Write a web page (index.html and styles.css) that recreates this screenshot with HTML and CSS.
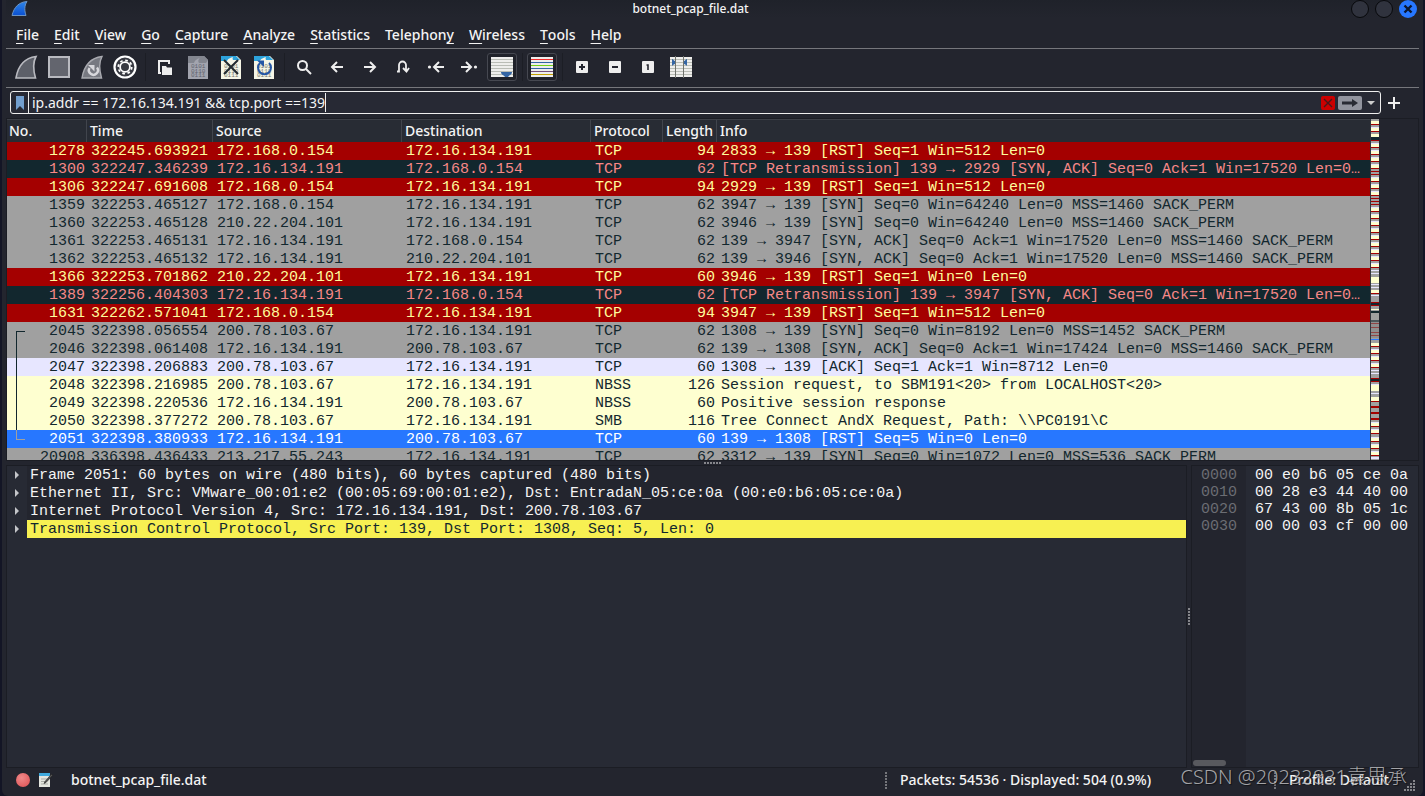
FILE: index.html
```html
<!DOCTYPE html>
<html lang="en">
<head>
<meta charset="utf-8">
<title>botnet_pcap_file.dat</title>
<link rel="stylesheet" href="styles.css">
</head>
<body>
<div class="window">
  <header class="titlebar">
    <svg class="app-icon" width="18" height="18" viewBox="0 0 18 18"><defs><linearGradient id="fin" x1="0" y1="0" x2="0" y2="1"><stop offset="0" stop-color="#2f86e8"/><stop offset="1" stop-color="#0a4fd0"/></linearGradient></defs><path d="M1 15.500C3 7 8 2 16 1.500C13 6 13.500 11 15 15.500Z" fill="url(#fin)" stroke="#6b93c4" stroke-width="1"/></svg>
    <h1 class="title">botnet_pcap_file.dat</h1>
    <div class="window-buttons">
      <button class="round" aria-label="Minimize"></button>
      <button class="round" aria-label="Maximize"></button>
      <button class="round close" aria-label="Close"><svg width="18" height="18" viewBox="0 0 18 18"><path d="M5.500 5.500l7 7M12.500 5.500l-7 7" stroke="#0b1730" stroke-width="2.400"/></svg></button>
    </div>
  </header>
  <nav class="menubar">
    <button><u>F</u>ile</button><button><u>E</u>dit</button><button><u>V</u>iew</button><button><u>G</u>o</button><button><u>C</u>apture</button><button><u>A</u>nalyze</button><button><u>S</u>tatistics</button><button>Telephon<u>y</u></button><button><u>W</u>ireless</button><button><u>T</u>ools</button><button><u>H</u>elp</button>
  </nav>
  <div class="toolbar">
    <button aria-label="Start capture"><svg viewBox="0 0 24 24"><path d="M2 23C4 11 10 3 22 1.500C18.500 8 19.500 16 21.500 23Z" fill="#5d6069" stroke="#b9bac0" stroke-width="1.600"/></svg></button>
    <button aria-label="Stop capture"><svg viewBox="0 0 24 24"><rect x="2" y="2" width="20" height="20" fill="#63656e" stroke="#b9bac0" stroke-width="2"/></svg></button>
    <button aria-label="Restart capture"><svg viewBox="0 0 24 24"><path d="M2 23C4 11 10 3 22 1.500C18.500 8 19.500 16 21.500 23Z" fill="#777981" stroke="#a9aab0" stroke-width="1.400"/><path d="M9.500 13A4.500 4.500 0 1 0 17 12.500" fill="none" stroke="#d8d8dc" stroke-width="2.400"/><path d="M8 10h6.500v6.500Z" fill="#d8d8dc"/></svg></button>
    <button aria-label="Capture options"><svg viewBox="0 0 24 24"><circle cx="12" cy="12" r="10.500" fill="#383a42" stroke="#fff" stroke-width="2.200"/><circle cx="12" cy="12" r="6.700" fill="none" stroke="#fff" stroke-width="1.800" stroke-dasharray="2.630 2.630"/><circle cx="12" cy="12" r="4.900" fill="#383a42" stroke="#fff" stroke-width="1.800"/></svg></button>
    <span class="sep"></span>
    <button aria-label="Open"><svg viewBox="0 0 24 24"><path d="M8 18H6V6h10v3" fill="none" stroke="#eee" stroke-width="2"/><path d="M9 11h4l1 1.500h5V20H9Z" fill="#eee"/></svg></button>
    <button aria-label="Save"><svg viewBox="0 0 24 24"><path d="M2 1h16l4 4v19H2Z" fill="#a2a4ae"/><path d="M2 1h16l4 4-2 3h-7c-2-3 1-5 1-5s-5 1-6 5H2Z" fill="#83868f"/><g class="bits dim"><text x="5" y="13">0101</text><text x="5" y="18">0110</text><text x="5" y="22">0111</text></g></svg></button>
    <button aria-label="Close file"><svg viewBox="0 0 24 24"><path d="M2 1h16l4 4v19H2Z" fill="#f5f5e6"/><path d="M2 1h15l4 4h-7c-1-2 0-3 0-3S9 3 8 6H2Z" fill="#2da3dc"/><g class="bits"><text x="5" y="13">0101</text><text x="5" y="18">0110</text><text x="5" y="22">0111</text></g><path d="M5 5l14 14M19 5L5 19" stroke="#222a30" stroke-width="2"/></svg></button>
    <button aria-label="Reload"><svg viewBox="0 0 24 24"><path d="M2 1h16l4 4v19H2Z" fill="#f5f5e6"/><path d="M2 1h15l4 4h-7c-1-2 0-3 0-3S9 3 8 6H2Z" fill="#2da3dc"/><g class="bits"><text x="5" y="13">0101</text><text x="5" y="18">0110</text><text x="5" y="22">0111</text></g><path d="M17 8a6.500 6.500 0 1 1-9 0" fill="none" stroke="#2456a5" stroke-width="2"/><path d="M5 5.500h7v6.500Z" fill="#2456a5"/></svg></button>
    <span class="sep"></span>
    <button aria-label="Find"><svg viewBox="0 0 24 24"><circle cx="10.500" cy="10.500" r="4.500" fill="none" stroke="#eee" stroke-width="2"/><path d="M14 14l5 5" stroke="#eee" stroke-width="2"/></svg></button>
    <button aria-label="Back"><svg viewBox="0 0 24 24"><path d="M18 12H7M12 7l-5 5 5 5" fill="none" stroke="#eee" stroke-width="2"/></svg></button>
    <button aria-label="Forward"><svg viewBox="0 0 24 24"><path d="M6 12h11M12 7l5 5-5 5" fill="none" stroke="#eee" stroke-width="2"/></svg></button>
    <button aria-label="Go to packet"><svg viewBox="0 0 24 24"><path d="M6 16.500h2V10a3.500 3.500 0 0 1 7 0v6M12 13l3.500 3.500L18 13" fill="none" stroke="#eee" stroke-width="1.800"/></svg></button>
    <button aria-label="First packet"><svg viewBox="0 0 24 24"><circle cx="5.500" cy="12" r="1.600" fill="#eee"/><path d="M20 12H10M15 7l-5 5 5 5" fill="none" stroke="#eee" stroke-width="2"/></svg></button>
    <button aria-label="Last packet"><svg viewBox="0 0 24 24"><circle cx="18.500" cy="12" r="1.600" fill="#eee"/><path d="M4 12h10M9 7l5 5-5 5" fill="none" stroke="#eee" stroke-width="2"/></svg></button>
    <button class="pressed" aria-label="Auto scroll"><svg viewBox="0 0 24 24"><path d="M1 2h22v20H1Z" fill="#eeeeec"/><path d="M1 4.500h22M1 7.500h22M1 10.500h22M1 13.500h22M1 16.500h22M1 19.500h22" stroke="#babdb6"/><path d="M11 17h11c0 3-3 3-4 5h-3c-1-2-4-2-4-5Z" fill="#3465a4"/></svg></button>
    <span class="sep"></span>
    <button class="pressed" aria-label="Colorize"><svg viewBox="0 0 24 24"><path d="M1 2h22v20H1Z" fill="#eeeeec"/><path d="M1 4.500h22" stroke="#ef2929"/><path d="M1 7.500h22M1 13.500h22" stroke="#3465a4"/><path d="M1 10.500h22" stroke="#73d216"/><path d="M1 16.500h22" stroke="#75507b"/><path d="M1 19.500h22" stroke="#c4a000"/></svg></button>
    <span class="sep"></span>
    <button aria-label="Zoom in"><svg viewBox="0 0 24 24"><rect x="6" y="6" width="12" height="12" rx="1" fill="#eee"/><path d="M12 9v6M9 12h6" stroke="#23252e" stroke-width="2"/></svg></button>
    <button aria-label="Zoom out"><svg viewBox="0 0 24 24"><rect x="6" y="6" width="12" height="12" rx="1" fill="#eee"/><path d="M9 12h6" stroke="#23252e" stroke-width="2"/></svg></button>
    <button aria-label="Normal size"><svg viewBox="0 0 24 24"><rect x="6" y="6" width="12" height="12" rx="1" fill="#eee"/><path d="M10.500 10h1.500v5" fill="none" stroke="#23252e" stroke-width="1.600"/></svg></button>
    <button aria-label="Resize columns"><svg viewBox="0 0 24 24"><path d="M1 2h22v20H1Z" fill="#eeeeec"/><path d="M1 4.500h22M1 7.500h22M1 10.500h22M1 13.500h22M1 16.500h22M1 19.500h22" stroke="#babdb6"/><path d="M6.500 1v22M14.500 1v22" stroke="#70736e"/><path d="M3 4c1 0 2 2 3 2v3c-1 0-2 1-3 2ZM18 4c-1 0-2 2-3 2v3c1 0 2 1 3 2Z" fill="#3465a4"/></svg></button>
  </div>
  <div class="filterbar">
    <div class="filter">
      <button class="bookmark" aria-label="Filter bookmarks"><svg width="8" height="14" viewBox="0 0 8 14"><path d="M0 0h8v14l-4-4-4 4Z" fill="#729fcf"/></svg></button>
      <label class="field"><input type="text" aria-label="Display filter" value="ip.addr == 172.16.134.191 &amp;&amp; tcp.port ==139"><span class="caret"></span></label>
      <button class="clear" aria-label="Clear filter"><svg width="14" height="14" viewBox="0 0 14 14"><rect width="14" height="14" rx="2" fill="#cc0000"/><path d="M3 3l8 8M11 3l-8 8" stroke="#46181b" stroke-width="1.400"/></svg></button>
      <button class="apply" aria-label="Apply filter"><svg width="24" height="14" viewBox="0 0 24 14"><rect width="24" height="14" rx="2" fill="#92949e"/><path d="M4 5.500h10V3l6 4-6 4V8.500H4Z" fill="#292b34"/></svg></button>
      <button class="history" aria-label="Filter history"><svg width="8" height="4" viewBox="0 0 8 4"><path d="M0 0h8L4 4Z" fill="#ccc"/></svg></button>
    </div>
    <button class="add" aria-label="Add filter button"><svg width="12" height="12" viewBox="0 0 12 12"><path d="M6 0v12M0 6h12" stroke="#eee" stroke-width="2"/></svg></button>
  </div>
  <main class="panes">
    <section class="packets">
      <div class="list">
        <table>
          <colgroup><col class="c-no"><col class="c-time"><col class="c-addr"><col class="c-addr"><col class="c-proto"><col class="c-len"><col></colgroup>
          <thead><tr><th>No.</th><th>Time</th><th>Source</th><th>Destination</th><th>Protocol</th><th>Length</th><th>Info</th></tr></thead>
          <tbody>
<tr class="rst"><td>1278</td><td>322245.693921</td><td>172.168.0.154</td><td>172.16.134.191</td><td>TCP</td><td>94</td><td>2833 → 139 [RST] Seq=1 Win=512 Len=0</td></tr>
<tr class="bad"><td>1300</td><td>322247.346239</td><td>172.16.134.191</td><td>172.168.0.154</td><td>TCP</td><td>62</td><td>[TCP Retransmission] 139 → 2929 [SYN, ACK] Seq=0 Ack=1 Win=17520 Len=0 MSS=1460 SACK_PERM</td></tr>
<tr class="rst"><td>1306</td><td>322247.691608</td><td>172.168.0.154</td><td>172.16.134.191</td><td>TCP</td><td>94</td><td>2929 → 139 [RST] Seq=1 Win=512 Len=0</td></tr>
<tr class="syn"><td>1359</td><td>322253.465127</td><td>172.168.0.154</td><td>172.16.134.191</td><td>TCP</td><td>62</td><td>3947 → 139 [SYN] Seq=0 Win=64240 Len=0 MSS=1460 SACK_PERM</td></tr>
<tr class="syn"><td>1360</td><td>322253.465128</td><td>210.22.204.101</td><td>172.16.134.191</td><td>TCP</td><td>62</td><td>3946 → 139 [SYN] Seq=0 Win=64240 Len=0 MSS=1460 SACK_PERM</td></tr>
<tr class="syn"><td>1361</td><td>322253.465131</td><td>172.16.134.191</td><td>172.168.0.154</td><td>TCP</td><td>62</td><td>139 → 3947 [SYN, ACK] Seq=0 Ack=1 Win=17520 Len=0 MSS=1460 SACK_PERM</td></tr>
<tr class="syn"><td>1362</td><td>322253.465132</td><td>172.16.134.191</td><td>210.22.204.101</td><td>TCP</td><td>62</td><td>139 → 3946 [SYN, ACK] Seq=0 Ack=1 Win=17520 Len=0 MSS=1460 SACK_PERM</td></tr>
<tr class="rst"><td>1366</td><td>322253.701862</td><td>210.22.204.101</td><td>172.16.134.191</td><td>TCP</td><td>60</td><td>3946 → 139 [RST] Seq=1 Win=0 Len=0</td></tr>
<tr class="bad"><td>1389</td><td>322256.404303</td><td>172.16.134.191</td><td>172.168.0.154</td><td>TCP</td><td>62</td><td>[TCP Retransmission] 139 → 3947 [SYN, ACK] Seq=0 Ack=1 Win=17520 Len=0 MSS=1460 SACK_PERM</td></tr>
<tr class="rst"><td>1631</td><td>322262.571041</td><td>172.168.0.154</td><td>172.16.134.191</td><td>TCP</td><td>94</td><td>3947 → 139 [RST] Seq=1 Win=512 Len=0</td></tr>
<tr class="syn first"><td>2045</td><td>322398.056554</td><td>200.78.103.67</td><td>172.16.134.191</td><td>TCP</td><td>62</td><td>1308 → 139 [SYN] Seq=0 Win=8192 Len=0 MSS=1452 SACK_PERM</td></tr>
<tr class="syn mid"><td>2046</td><td>322398.061408</td><td>172.16.134.191</td><td>200.78.103.67</td><td>TCP</td><td>62</td><td>139 → 1308 [SYN, ACK] Seq=0 Ack=1 Win=17424 Len=0 MSS=1460 SACK_PERM</td></tr>
<tr class="tcp mid"><td>2047</td><td>322398.206883</td><td>200.78.103.67</td><td>172.16.134.191</td><td>TCP</td><td>60</td><td>1308 → 139 [ACK] Seq=1 Ack=1 Win=8712 Len=0</td></tr>
<tr class="smb mid"><td>2048</td><td>322398.216985</td><td>200.78.103.67</td><td>172.16.134.191</td><td>NBSS</td><td>126</td><td>Session request, to SBM191&lt;20&gt; from LOCALHOST&lt;20&gt;</td></tr>
<tr class="smb mid"><td>2049</td><td>322398.220536</td><td>172.16.134.191</td><td>200.78.103.67</td><td>NBSS</td><td>60</td><td>Positive session response</td></tr>
<tr class="smb mid"><td>2050</td><td>322398.377272</td><td>200.78.103.67</td><td>172.16.134.191</td><td>SMB</td><td>116</td><td>Tree Connect AndX Request, Path: \\PC0191\C</td></tr>
<tr class="selected last"><td>2051</td><td>322398.380933</td><td>172.16.134.191</td><td>200.78.103.67</td><td>TCP</td><td>60</td><td>139 → 1308 [RST] Seq=5 Win=0 Len=0</td></tr>
<tr class="syn"><td>20908</td><td>336398.436433</td><td>213.217.55.243</td><td>172.16.134.191</td><td>TCP</td><td>62</td><td>3312 → 139 [SYN] Seq=0 Win=1072 Len=0 MSS=536 SACK_PERM</td></tr>
          </tbody>
        </table>
      </div>
      <svg class="minimap" id="minimap" width="8" height="341" viewBox="0 0 8 341" shape-rendering="crispEdges"></svg>
    </section>
    <div class="grip-h"></div>
    <section class="lower">
      <ul class="tree">
        <li><button aria-label="Expand"></button><span>Frame 2051: 60 bytes on wire (480 bits), 60 bytes captured (480 bits)</span></li>
        <li><button aria-label="Expand"></button><span>Ethernet II, Src: VMware_00:01:e2 (00:05:69:00:01:e2), Dst: EntradaN_05:ce:0a (00:e0:b6:05:ce:0a)</span></li>
        <li><button aria-label="Expand"></button><span>Internet Protocol Version 4, Src: 172.16.134.191, Dst: 200.78.103.67</span></li>
        <li class="current"><button aria-label="Expand"></button><span>Transmission Control Protocol, Src Port: 139, Dst Port: 1308, Seq: 5, Len: 0</span></li>
      </ul>
      <div class="grip-v"></div>
      <div class="hex">
        <pre class="offsets">0000
0010
0020
0030</pre>
        <pre class="bytes">00 e0 b6 05 ce 0a
00 28 e3 44 40 00
67 43 00 8b 05 1c
00 00 03 cf 00 00</pre>
        <div class="hscroll"></div>
      </div>
    </section>
  </main>
  <footer class="statusbar">
    <button aria-label="Expert information" class="expert"></button>
    <button aria-label="Capture comments"><svg width="14" height="14" viewBox="0 0 14 14"><path d="M0 0h11v14H0Z" fill="#e4e6e0"/><path d="M0 0h11v3H0Z" fill="#3fa9dd"/><path d="M2 6h6M2 8.500h5M2 11h7" stroke="#a9aca6"/><path d="M12.500 1L6 8.500l-1 2 2-1L13.500 2.500Z" fill="#555" stroke="#222" stroke-width=".6"/></svg></button>
    <span class="file">botnet_pcap_file.dat</span>
    <span class="dots"></span>
    <span class="counts">Packets: 54536 · Displayed: 504 (0.9%)</span>
    <span class="dots"></span>
    <span class="profile">Profile: Default</span>
    <svg class="resize" width="12" height="12" viewBox="0 0 12 12"><path d="M9 1h2M6 4h2M9 4h2M3 7h2M6 7h2M9 7h2M0 10h2M3 10h2M6 10h2M9 10h2" stroke="#85868b" stroke-width="2"/></svg>
  </footer>
  <div class="watermark">CSDN @20232831袁思承</div>
</div>
<script src="minimap.js"></script>
</body>
</html>
```
FILE: styles.css
```css
* { box-sizing: border-box; }
body { margin: 0; height: 100vh; padding: 0 2px; overflow: hidden; background: #131525; color: #f4f4f4; font: 500 14px/20px "Noto Sans", sans-serif; }
button { margin: 0; padding: 0; border: 0; background: none; color: inherit; font: inherit; display: flex; align-items: center; justify-content: center; }
svg { display: block; }
.window { position: relative; height: 100%; padding: 0 4px; background: #23252e; display: flex; flex-direction: column; border-radius: 0 0 6px 6px; }
.titlebar { height: 18px; display: grid; grid-template-columns: 1fr auto 1fr; align-items: center; background: linear-gradient(#1f222a, #23252e); }
.app-icon { margin-left: 5px; }
.title { margin: 0; padding-right: 44px; font-size: 12px; line-height: 18px; font-weight: 500; }
.window-buttons { display: flex; gap: 6px; justify-content: flex-end; padding-right: 2px; }
.round { width: 18px; height: 18px; border: 1px solid #08090c; border-radius: 50%; background: #30333e; }
.round.close { border: 0; background: #2777ff; }
.menubar { height: 31px; padding: 5px 10px 0; display: flex; align-items: flex-start; gap: 15px; border-bottom: 1px solid #76777c; }
.menubar button { height: 24px; }
.menubar u { text-underline-offset: 3px; text-decoration-thickness: 1px; text-decoration-skip-ink: none; }
.toolbar { height: 39px; padding: 4px 8px 0; display: flex; align-items: flex-start; gap: 9px; border-bottom: 1px solid #76777c; }
.toolbar button { width: 24px; height: 28px; flex: none; }
.toolbar button svg { width: 24px; height: 24px; flex: none; }
.toolbar .pressed { width: 30px; margin: 0 -3px; border: 1px solid #464851; border-radius: 3px; background: #20222a; }
.sep { width: 1px; height: 28px; margin: 0 -2px 0 -1px; background: #1c1e25; }
.bits { font: 6px "Liberation Mono", monospace; fill: #77796f; }
.bits.dim { fill: #60636d; }
.filterbar { height: 30px; padding: 3px 18px 4px 4px; display: flex; align-items: center; gap: 6px; }
.filter { flex: 1; height: 23px; display: flex; align-items: center; border: 1px solid #eee; border-radius: 3px; background: #272934; }
.bookmark { width: 18px; height: 21px; border-right: 1px solid #eee; }
.field { flex: 1; display: flex; align-items: center; }
.field input { field-sizing: content; padding: 0 0 0 3px; border: 0; outline: 0; background: none; color: inherit; font: 400 14px/20px "Noto Sans", sans-serif; height: 20px; }
.caret { width: 1px; height: 19px; background: #eee; }
.clear { margin-right: 3px; }
.history { width: 18px; }
.add { width: 14px; }
.panes { flex: 1; min-height: 0; display: grid; grid-template-rows: 343fr 4px 303fr; }
.packets { min-height: 0; display: flex; border: 1px solid #1b1d24; padding-right: 39px; overflow: hidden; }
.list { flex: 1; min-width: 0; overflow: hidden; border-right: 1px solid #33363e; }
table { width: 100%; table-layout: fixed; border-collapse: separate; border-spacing: 0; font: 15px/17px "Liberation Mono", monospace; }
.c-no { width: 80px; }
.c-time { width: 126px; }
.c-addr { width: 189px; }
.c-proto { width: 72px; }
.c-len { width: 54px; }
th { height: 23px; padding: 0 3px; border-right: 1px solid #41454d; border-top: 1px solid #3c3f47; background: #282c34; text-align: left; font: 500 14px/20px "Noto Sans", sans-serif; }
th:first-child { padding-left: 2px; }
th:last-child { border-right: 0; }
td { height: 18px; padding: 1px 8px 0 4px; overflow: hidden; white-space: nowrap; text-overflow: ellipsis; }
td:nth-child(1), td:nth-child(6) { padding: 1px 2px 0; text-align: right; }
td:nth-child(2) { padding-right: 0; }
.rst { background: #a40000; color: #fffc9c; }
.bad { background: #12272e; color: #f78787; }
.syn { background: #a0a0a0; color: #12272e; }
.tcp { background: #e7e6ff; color: #12272e; }
.smb { background: #feffd0; color: #12272e; }
.selected { background: #2777ff; color: #fff; }
.first td:first-child { background: linear-gradient(#12272e, #12272e) 9px 9px / 9px 1px no-repeat, linear-gradient(#12272e, #12272e) 9px 9px / 1px 9px no-repeat; }
.mid td:first-child { background: linear-gradient(#12272e, #12272e) 9px 0 / 1px 100% no-repeat; }
.last td:first-child { background: linear-gradient(#a0a0a0, #a0a0a0) 9px 9px / 9px 1px no-repeat, linear-gradient(#a0a0a0, #a0a0a0) 9px 0 / 1px 9px no-repeat; }
.minimap { flex: none; }
.grip-h { justify-self: center; width: 17px; height: 2px; margin-top: 1px; background: repeating-linear-gradient(90deg, #85868b 0 2px, transparent 2px 3px); }
.lower { min-height: 0; display: flex; font: 15px/17px "Liberation Mono", monospace; }
.tree { flex: 1; margin: 0; padding: 0; list-style: none; border: 1px solid #1b1d24; background: #272a34; }
.tree li { display: flex; }
.tree button { width: 20px; height: 18px; background: #272a34; }
.tree button::before { content: ""; border: 4px solid transparent; border-left-color: #c4c5c9; border-right: 0; }
.tree span { flex: 1; padding: 1px 0 0 3px; white-space: pre; background: #23252e; }
.tree .current span { background: #f7f052; color: #12272e; }
.grip-v { align-self: center; width: 2px; height: 17px; margin: 0 1px; background: repeating-linear-gradient(#85868b 0 2px, transparent 2px 3px); }
.hex { position: relative; width: 228px; display: flex; border: 1px solid #1b1d24; background: #272a34; }
.hex pre { margin: 0; font: 15px/17px "Liberation Mono", monospace; }
.hex .offsets { width: 54px; padding-left: 9px; padding-top: 1px; background: #23252e; color: #6b6d73; }
.hex .bytes { flex: 1; padding: 1px 0 0 9px; }
.hscroll { position: absolute; left: 1px; bottom: 1px; width: 33px; height: 6px; border-radius: 3px; background: #58595e; }
.statusbar { height: 28px; padding: 0 0 4px 10px; display: flex; align-items: center; }
.expert { width: 14px; height: 14px; margin-right: 9px; border-radius: 50%; background: radial-gradient(circle at 40% 35%, #f08a8a, #dd4d50); }
.file { flex: 1; margin-left: 18px; }
.dots { width: 2px; height: 17px; background: repeating-linear-gradient(#75767b 0 2px, transparent 2px 3px); }
.counts { width: 387px; padding-left: 13px; }
.profile { width: 128px; padding-left: 13px; }
.resize { align-self: flex-end; margin-right: 3px; }
.watermark { position: absolute; right: 16px; bottom: 4px; font: 300 20px/30px "Noto Sans", "Noto Sans CJK SC", sans-serif; color: #c8c8cacc; text-shadow: 1px 1px 1px #0008; white-space: nowrap; }
```
FILE: minimap.js
```js
const map = document.getElementById("minimap");
const colors = { red: "#a40000", gray: "#a0a0a0", lav: "#e7e6ff", yellow: "#feffd0", dark: "#12272e", blue: "#2777ff" };

function bar(y, h, name) {
  const r = document.createElementNS("http://www.w3.org/2000/svg", "rect");
  r.setAttribute("y", y);
  r.setAttribute("width", 8);
  r.setAttribute("height", h);
  r.setAttribute("fill", colors[name] || name);
  map.appendChild(r);
}

bar(0, 341, "gray");
bar(2, 3, "yellow");

// One conversation: a reset, the handshake, then the session packets.
const resets = [5, 12, 21, 28, 35, 42, 49, 52, 55, 62, 69, 76, 79, 82, 85, 92, 99, 106, 113, 120, 127, 134, 141, 148, 174, 183, 186, 227, 234, 241, 248, 259, 262, 282, 307, 314, 322, 329, 336];
resets.forEach((y, i) => {
  const gap = (resets[i + 1] || 341) - y;
  bar(y, 1, "red");
  if (gap >= 7 && gap <= 9) {
    bar(y + gap - 4, 1, "lav");
    bar(y + gap - 3, 3, "yellow");
  }
});

// Stretches that break the regular rhythm.
[[15, 3, "yellow"], [18, 3, "dark"], [151, 1, "lav"], [154, 1, "lav"], [158, 6, "yellow"], [165, 1, "lav"], [168, 1, "lav"], [171, 3, "yellow"],
 [176, 1, "lav"], [179, 4, "gray"], [184, 2, "dark"], [190, 1, "yellow"], [192, 2, "dark"], [201, 2, "dark"], [204, 1, "red"],
 [208, 1, "red"], [213, 1, "red"], [216, 1, "red"], [201, 18, "#80808088"], [220, 1, "blue"], [224, 3, "yellow"],
 [251, 1, "lav"], [254, 1, "lav"], [260, 2, "dark"], [265, 1, "lav"], [266, 6, "yellow"], [274, 1, "lav"], [278, 4, "yellow"],
 [287, 2, "red"], [293, 2, "red"], [299, 2, "red"], [303, 1, "lav"], [304, 3, "yellow"], [338, 2, "lav"]
].forEach(([y, h, name]) => bar(y, h, name));
```
